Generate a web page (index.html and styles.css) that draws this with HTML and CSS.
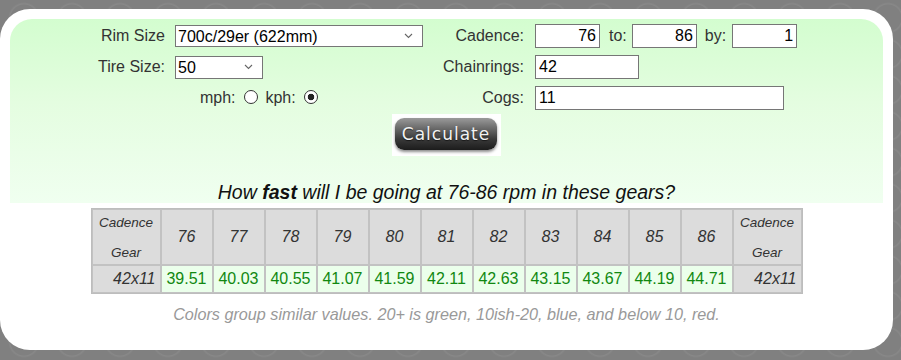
FILE: index.html
```html
<!DOCTYPE html>
<html lang="en">
<head>
    <meta charset="UTF-8">
    <title>Gear Speed Calculator</title>
    <link rel="stylesheet" href="styles.css">
</head>
<body>

    <div class="panel">
        <div class="calc">
            <form class="fields">
                <div class="field-group left">
                    <label class="field-label">Rim Size</label>
                    <select class="rim-select">
                        <option>700c/29er (622mm)</option>
                    </select>

                    <label class="field-label">Tire Size:</label>
                    <select class="tire-select">
                        <option>50</option>
                    </select>

                    <div class="units">
                        mph: <input type="radio" name="units"> kph: <input type="radio" name="units" checked>
                    </div>
                </div>

                <div class="field-group right">
                    <label class="field-label">Cadence:</label>
                    <div class="cadence">
                        <input type="text" class="num-input" value="76">
                        <span class="sep-to">to:</span>
                        <input type="text" class="num-input" value="86">
                        <span class="sep-by">by:</span>
                        <input type="text" class="num-input" value="1">
                    </div>

                    <label class="field-label">Chainrings:</label>
                    <div><input type="text" class="text-input chainrings" value="42"></div>

                    <label class="field-label">Cogs:</label>
                    <div><input type="text" class="text-input cogs" value="11"></div>
                </div>
            </form>

            <div class="button-box">
                <button type="button" class="calc-button">Calculate</button>
            </div>

            <h2 class="question">How <b>fast</b> will I be going at 76-86 rpm in these gears?</h2>
        </div>

        <table class="results">
            <tr>
                <th class="corner">Cadence<br><br>Gear</th>
                <th>76</th><th>77</th><th>78</th><th>79</th><th>80</th><th>81</th>
                <th>82</th><th>83</th><th>84</th><th>85</th><th>86</th>
                <th class="corner">Cadence<br><br>Gear</th>
            </tr>
            <tr>
                <th class="gear">42x11</th>
                <td>39.51</td><td>40.03</td><td>40.55</td><td>41.07</td><td>41.59</td><td>42.11</td>
                <td>42.63</td><td>43.15</td><td>43.67</td><td>44.19</td><td>44.71</td>
                <th class="gear">42x11</th>
            </tr>
        </table>

        <p class="note">Colors group similar values. 20+ is green, 10ish-20, blue, and below 10, red.</p>
    </div>

</body>
</html>
```

FILE: styles.css
```css
* {
    box-sizing: border-box;
}

body {
    margin: 0;
    font-family: 'Liberation Sans', Arial, sans-serif;
    background-color: #808080;
    background-image: radial-gradient(circle at 50% 50%, transparent 13px, rgba(255, 255, 255, 0.07) 14px, transparent 16px);
    background-size: 48px 36px;
    color: #333;
}

.panel {
    width: 893px;
    height: 341px;
    margin-top: 9px;
    padding: 10px 10px 0 10px;
    background: #fff;
    border-radius: 30px;
}

.calc {
    background: linear-gradient(#d3fdcf, #e4fde0 45%, #f0fff0);
    border-radius: 22px 22px 0 0;
    padding-top: 5px;
    text-align: center;
}

.fields {
    display: flex;
    justify-content: center;
    gap: 20px;
    margin: 0 0 0 2px;
}

.field-group {
    display: grid;
    grid-auto-rows: 24px;
    row-gap: 7px;
    align-items: center;
    text-align: left;
}

.field-group.left {
    grid-template-columns: 67px 248px;
    column-gap: 10px;
}

.field-group.right {
    grid-template-columns: 81px 262px;
    column-gap: 11px;
}

.field-label {
    font-size: 16px;
    text-align: right;
    color: #333;
    white-space: nowrap;
}

select,
input {
    font-family: 'Liberation Sans', Arial, sans-serif;
    font-size: 16px;
    color: #000;
}

select {
    appearance: none;
    -webkit-appearance: none;
    border: 1px solid #767676;
    padding: 0 2px;
    background: #fff url("data:image/svg+xml,%3Csvg xmlns='http://www.w3.org/2000/svg' width='9' height='6'%3E%3Cpath d='M1 1l3.5 3.5L8 1' fill='none' stroke='%23666' stroke-width='1.1'/%3E%3C/svg%3E") no-repeat right 9px center;
}

.rim-select {
    width: 248px;
    height: 22px;
}

.tire-select {
    width: 88px;
    height: 23px;
}

.units {
    grid-column: 1 / 3;
    text-align: center;
    font-size: 16px;
}

.units input {
    appearance: none;
    -webkit-appearance: none;
    width: 14px;
    height: 14px;
    margin: 0 3px 0 4px;
    border: 1px solid #333;
    border-radius: 50%;
    background: #fff;
    vertical-align: -1px;
}

.units input:checked {
    background: radial-gradient(circle, #222 3px, #fff 3.6px);
}

.cadence {
    display: flex;
    align-items: center;
    font-size: 16px;
}

.num-input,
.text-input {
    height: 24px;
    border: 1px solid #767676;
    padding: 0 3px;
    background: #fff;
}

.num-input {
    width: 65px;
    flex: none;
    text-align: right;
}

.sep-to {
    margin: 0 5px 0 9px;
}

.sep-by {
    margin: 0 6px 0 8px;
}

.chainrings {
    width: 104px;
}

.cogs {
    width: 249px;
}

.button-box {
    display: inline-block;
    margin-top: 4px;
    padding: 4px 4px 6px 3px;
    background: #fff;
}

.calc-button {
    display: block;
    width: 102px;
    height: 32px;
    border: none;
    border-radius: 9px;
    background: linear-gradient(#9a9a9a, #666 35%, #3a3a3a 65%, #1c1c1c);
    box-shadow: 0 2px 3px rgba(0, 0, 0, 0.45);
    color: #f2f2f2;
    font-family: 'DejaVu Sans', sans-serif;
    font-size: 17px;
    letter-spacing: 1px;
    text-shadow: 0 1px 1px rgba(0, 0, 0, 0.6);
    cursor: pointer;
}

.question {
    margin: 25px 0 0;
    font-size: 19.5px;
    line-height: 22px;
    font-weight: normal;
    font-style: italic;
    color: #111;
}

.results {
    margin: 5px auto 0;
    border-collapse: separate;
    border-spacing: 0;
    border: 1px solid #bdbdbd;
    font-size: 16px;
}

.results th,
.results td {
    border: 1px solid #c2c2c2;
    height: 28px;
    padding: 0;
    width: 52px;
    text-align: center;
}

.results th {
    background: #dcdcdc;
    font-weight: normal;
    font-style: italic;
    color: #333;
}

.results tr:first-child th {
    height: 56px;
}

.results th.corner {
    width: 69px;
    font-size: 13.5px;
    line-height: 15px;
    padding: 0 2px;
}

.results th.gear {
    text-align: right;
    padding-right: 4px;
}

.results td {
    background: #ebffeb;
    color: #118811;
}

.note {
    margin: 11px 0 0;
    font-size: 16.2px;
    font-style: italic;
    color: #999;
    text-align: center;
}
```
